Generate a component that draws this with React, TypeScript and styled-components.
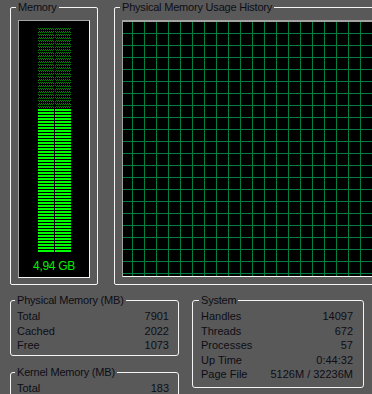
import styled, { createGlobalStyle } from 'styled-components';

const GlobalStyle = createGlobalStyle`
  html, body {
    margin: 0;
    padding: 0;
    background: #595959;
  }
  body {
    font-family: "Liberation Sans", Arial, sans-serif;
    font-size: 11px;
    color: #0d0d16;
  }
`;

const Page = styled.div`
  width: 372px;
  height: 394px;
  overflow: hidden;
  box-sizing: border-box;
  padding: 1px 0 0 10px;
  display: flex;
  flex-direction: column;
  gap: 9px;
`;

const TopRow = styled.div`
  display: flex;
  gap: 16px;
  height: 284px;
  flex-shrink: 0;
`;

const BottomRow = styled.div`
  display: flex;
  gap: 13px;
  align-items: flex-start;
`;

const Column = styled.div`
  display: flex;
  flex-direction: column;
  gap: 10px;
`;

const Group = styled.fieldset<{ $width: number }>`
  box-sizing: border-box;
  width: ${(p) => p.$width}px;
  min-width: 0;
  flex-shrink: 0;
  margin: 0;
  border: 1px solid #f4f4f4;
  border-radius: 3px;
  padding: 2px 9px 2px 6px;
`;

const ChartGroup = styled(Group)`
  display: flex;
  flex-direction: column;
  padding: 6px 7px 6px 7px;
  border-radius: 2px;
`;

const Legend = styled.legend`
  margin-left: -2px;
  padding: 0 2px;
  line-height: 13px;
  font-size: 11px;
  letter-spacing: -0.2px;
  color: #0d0d16;
`;

const Meter = styled.div`
  flex: 1;
  display: flex;
  flex-direction: column;
  align-items: center;
  background: #000;
  border-top: 1px solid #a4a4a4;
  border-left: 1px solid #a4a4a4;
  border-right: 1px solid #f4f4f4;
  border-bottom: 1px solid #f4f4f4;
  padding-top: 7px;
`;

const MeterText = styled.div`
  margin-top: 7px;
  color: #00f000;
  font-size: 12px;
  line-height: 14px;
  letter-spacing: -0.3px;
`;

const Graph = styled.div`
  flex: 1;
  margin-bottom: 1px;
  background-color: #000;
  background-image:
    linear-gradient(to right, transparent 11px, #008040 11px),
    linear-gradient(to bottom, transparent 11px, #008040 11px);
  background-size: 12px 100%, 100% 12px;
  background-position: -2px 0, 0 0;
  border-top: 2px solid #a4a4a4;
  border-left: 1px solid #a4a4a4;
  border-bottom: 1px solid #f4f4f4;
`;

const Row = styled.div`
  display: flex;
  justify-content: space-between;
  line-height: 14.5px;
  white-space: nowrap;
`;

const SystemGroup = styled(Group)`
  padding: 2px 10px 5px 8px;
`;

const ROWS = 75;
const LIT_FROM = 27;

function MemoryBars() {
  const rows = Array.from({ length: ROWS }, (_, i) => i);
  return (
    <svg width="33" height={ROWS * 3 - 1} shapeRendering="crispEdges">
      <defs>
        <pattern id="dim" width="2" height="2" patternUnits="userSpaceOnUse">
          <rect x="0" y="0" width="1" height="1" fill="#008400" />
          <rect x="1" y="1" width="1" height="1" fill="#008400" />
        </pattern>
      </defs>
      {rows.map((i) => {
        const fill = i >= LIT_FROM ? '#00ff00' : 'url(#dim)';
        return (
          <g key={i}>
            <rect x="0" y={i * 3} width="16" height="2" fill={fill} />
            <rect x="17" y={i * 3} width="16" height="2" fill={fill} />
          </g>
        );
      })}
    </svg>
  );
}

type Stat = [string, string];

const physical: Stat[] = [
  ['Total', '7901'],
  ['Cached', '2022'],
  ['Free', '1073'],
];

const kernel: Stat[] = [['Total', '183']];

const system: Stat[] = [
  ['Handles', '14097'],
  ['Threads', '672'],
  ['Processes', '57'],
  ['Up Time', '0:44:32'],
  ['Page File', '5126M / 32236M'],
];

function Stats({ items }: { items: Stat[] }) {
  return (
    <>
      {items.map(([label, value]) => (
        <Row key={label}>
          <span>{label}</span>
          <span>{value}</span>
        </Row>
      ))}
    </>
  );
}

export default function App() {
  return (
    <>
      <GlobalStyle />
      <Page>
        <TopRow>
          <ChartGroup $width={88}>
            <Legend>Memory</Legend>
            <Meter>
              <MemoryBars />
              <MeterText>4,94 GB</MeterText>
            </Meter>
          </ChartGroup>
          <ChartGroup $width={270}>
            <Legend>Physical Memory Usage History</Legend>
            <Graph />
          </ChartGroup>
        </TopRow>
        <BottomRow>
          <Column>
            <Group $width={169}>
              <Legend>Physical Memory (MB)</Legend>
              <Stats items={physical} />
            </Group>
            <Group $width={169}>
              <Legend>Kernel Memory (MB)</Legend>
              <Stats items={kernel} />
            </Group>
          </Column>
          <SystemGroup $width={172}>
            <Legend>System</Legend>
            <Stats items={system} />
          </SystemGroup>
        </BottomRow>
      </Page>
    </>
  );
}
